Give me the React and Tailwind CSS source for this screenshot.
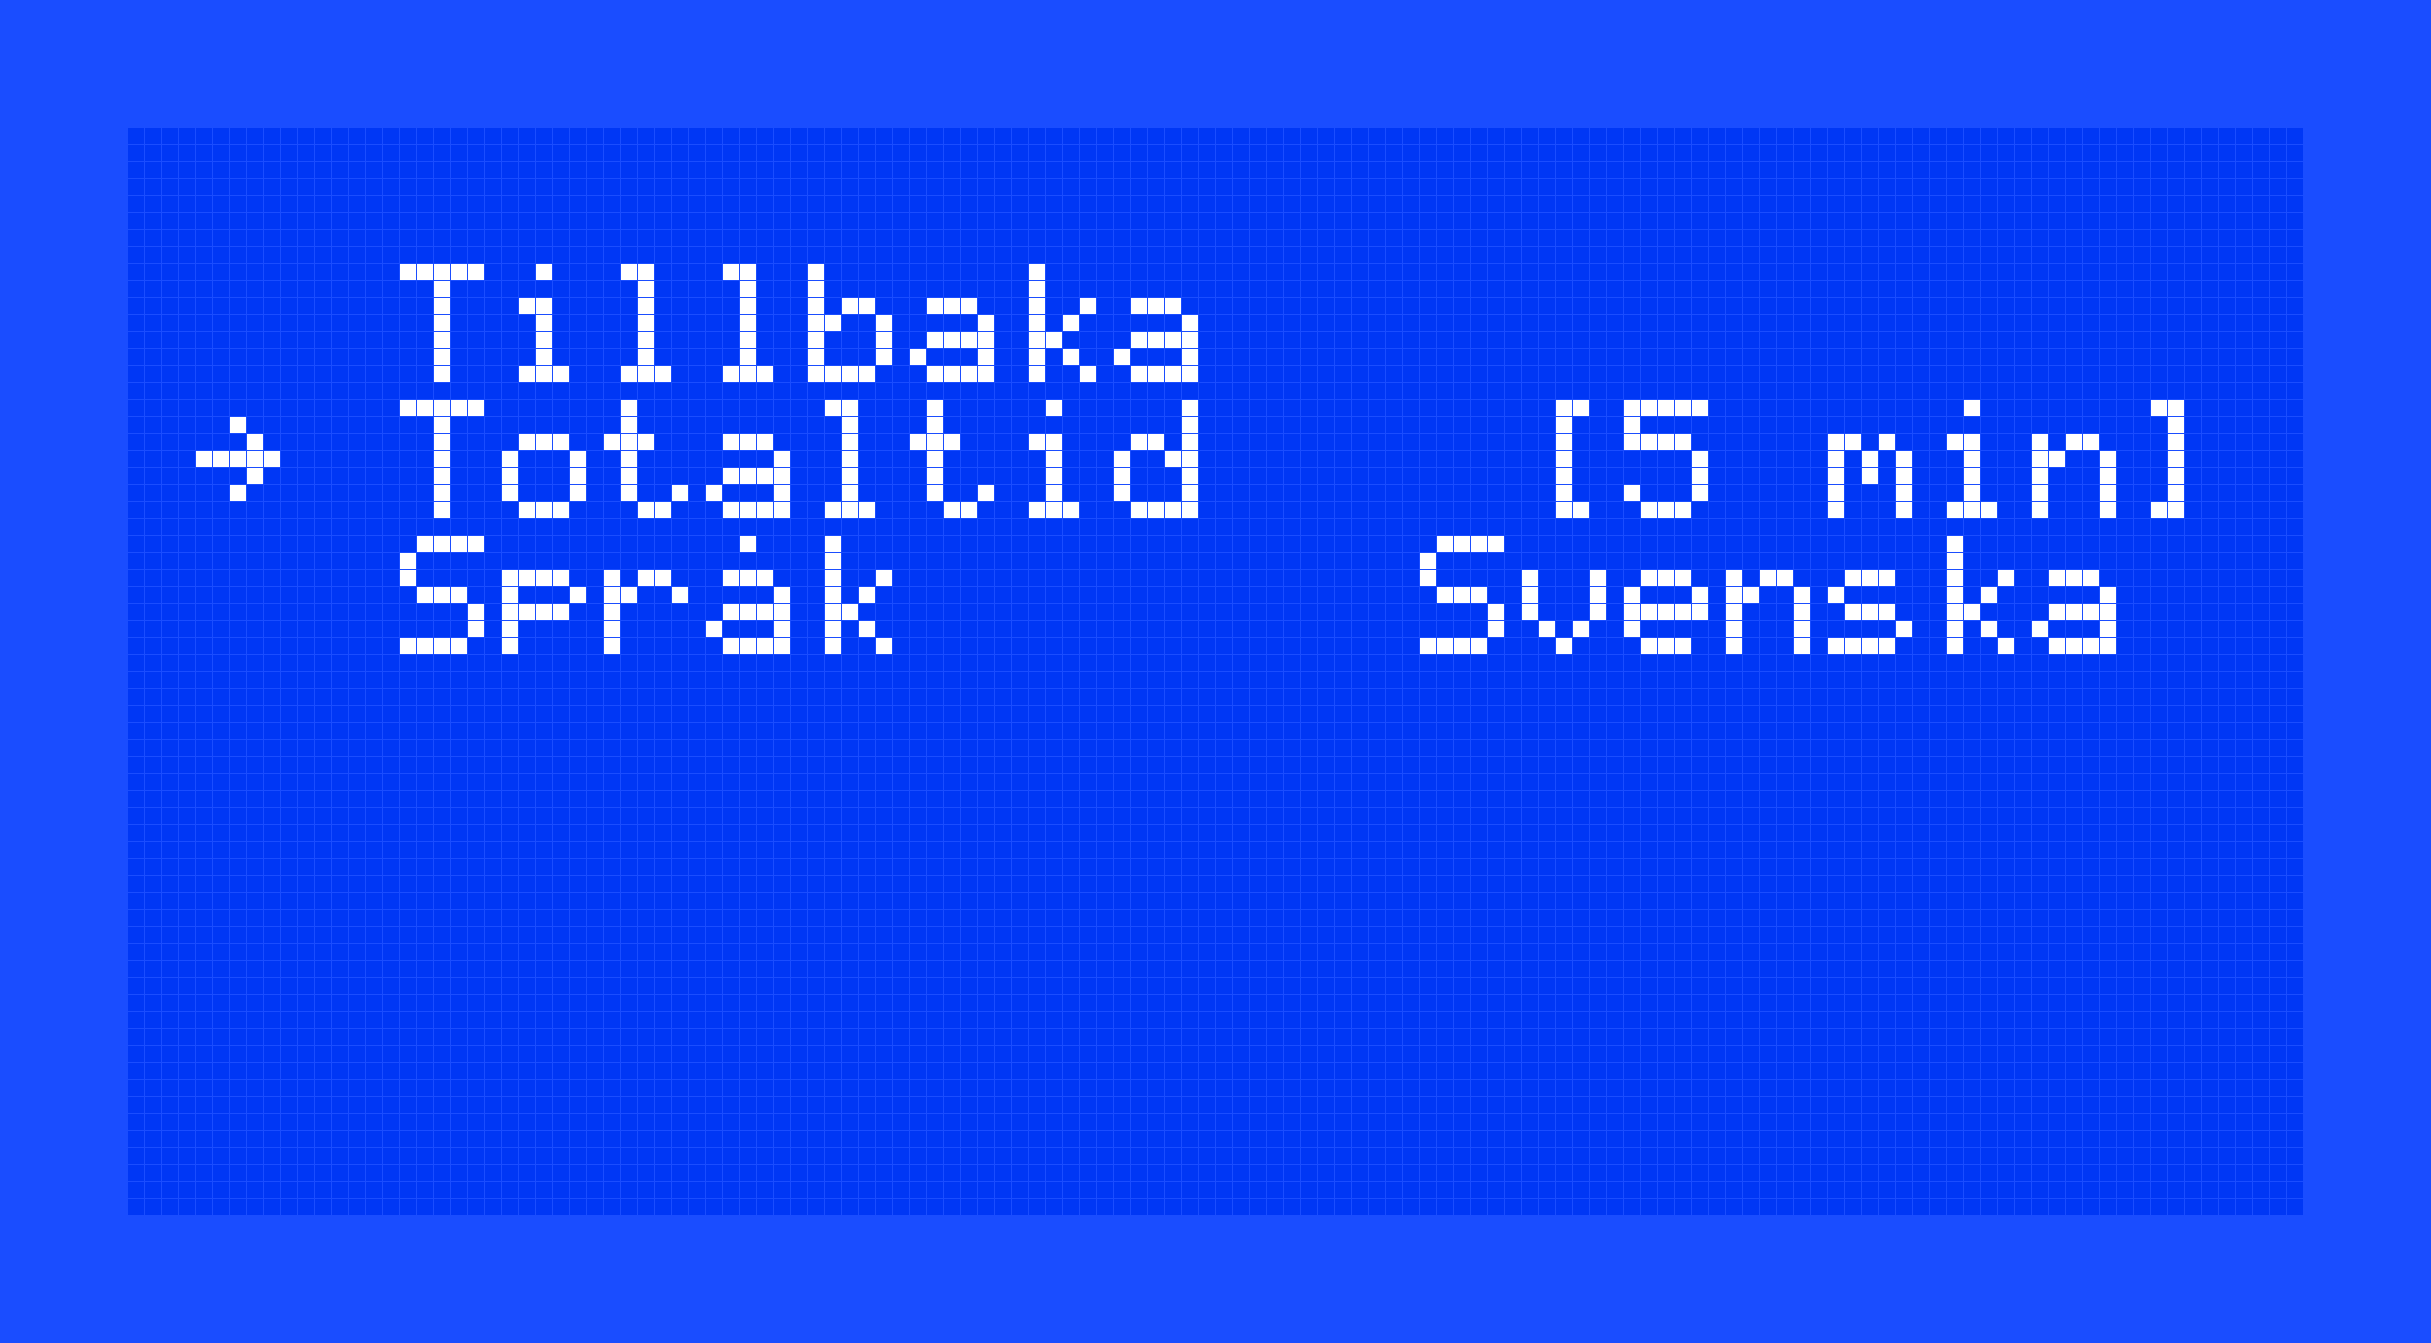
import React, { useMemo } from "react";

const FONT = {
  " ": ["00000", "00000", "00000", "00000", "00000", "00000", "00000"],
  "→": ["00000", "00100", "00010", "11111", "00010", "00100", "00000"],
  T: ["11111", "00100", "00100", "00100", "00100", "00100", "00100"],
  S: ["01111", "10000", "10000", "01110", "00001", "00001", "11110"],
  i: ["00100", "00000", "01100", "00100", "00100", "00100", "01110"],
  l: ["01100", "00100", "00100", "00100", "00100", "00100", "01110"],
  b: ["10000", "10000", "10110", "11001", "10001", "10001", "11110"],
  a: ["00000", "00000", "01110", "00001", "01111", "10001", "01111"],
  "å": ["00100", "00000", "01110", "00001", "01111", "10001", "01111"],
  k: ["01000", "01000", "01001", "01010", "01100", "01010", "01001"],
  o: ["00000", "00000", "01110", "10001", "10001", "10001", "01110"],
  t: ["01000", "01000", "11100", "01000", "01000", "01001", "00110"],
  d: ["00001", "00001", "01101", "10011", "10001", "10001", "01111"],
  p: ["00000", "00000", "11110", "10001", "11110", "10000", "10000"],
  r: ["00000", "00000", "10110", "11001", "10000", "10000", "10000"],
  v: ["00000", "00000", "10001", "10001", "10001", "01010", "00100"],
  e: ["00000", "00000", "01110", "10001", "11111", "10000", "01110"],
  n: ["00000", "00000", "10110", "11001", "10001", "10001", "10001"],
  s: ["00000", "00000", "01110", "10000", "01110", "00001", "11110"],
  m: ["00000", "00000", "11010", "10101", "10101", "10001", "10001"],
  "5": ["11111", "10000", "11110", "00001", "00001", "10001", "01110"],
  "[": ["00110", "00100", "00100", "00100", "00100", "00100", "00110"],
  "]": ["01100", "00100", "00100", "00100", "00100", "00100", "01100"],
};

const COLS = 128;
const ROWS = 64;

const LINES = [
  { row: 8, text: "  Tillbaka" },
  { row: 16, text: "→ Totaltid   [5 min]" },
  { row: 24, text: "  Språk     Svenska" },
];

function buildBitmap() {
  const bits = new Array(COLS * ROWS).fill(false);
  LINES.forEach(({ row, text }) => {
    Array.from(text).forEach((ch, idx) => {
      const glyph = FONT[ch] || FONT[" "];
      const x0 = 4 + idx * 6;
      glyph.forEach((line, gy) => {
        for (let gx = 0; gx < 5; gx++) {
          if (line[gx] === "1") {
            const x = x0 + gx;
            const y = row + gy;
            if (x < COLS && y < ROWS) bits[y * COLS + x] = true;
          }
        }
      });
    });
  });
  return bits;
}

export default function App() {
  const bits = useMemo(buildBitmap, []);
  return (
    <div className="flex h-screen w-full items-center justify-center bg-[#1a4dff] font-['Liberation_Mono',monospace]">
      <div className="relative">
        <div
          className="grid grid-cols-[repeat(128,16px)] grid-rows-[repeat(64,16px)] gap-px bg-[#1a4dff]"
          aria-hidden="true"
        >
          {bits.map((on, i) => (
            <div key={i} className={on ? "bg-white" : "bg-[#0037f5]"} />
          ))}
        </div>
        <div className="absolute inset-0 flex flex-col pt-[136px] pl-[68px]">
          {LINES.map((l) => (
            <p
              key={l.row}
              className="h-[136px] whitespace-pre text-[100px] leading-[119px] tracking-[42px] text-transparent select-text"
            >
              {l.text}
            </p>
          ))}
        </div>
      </div>
    </div>
  );
}
